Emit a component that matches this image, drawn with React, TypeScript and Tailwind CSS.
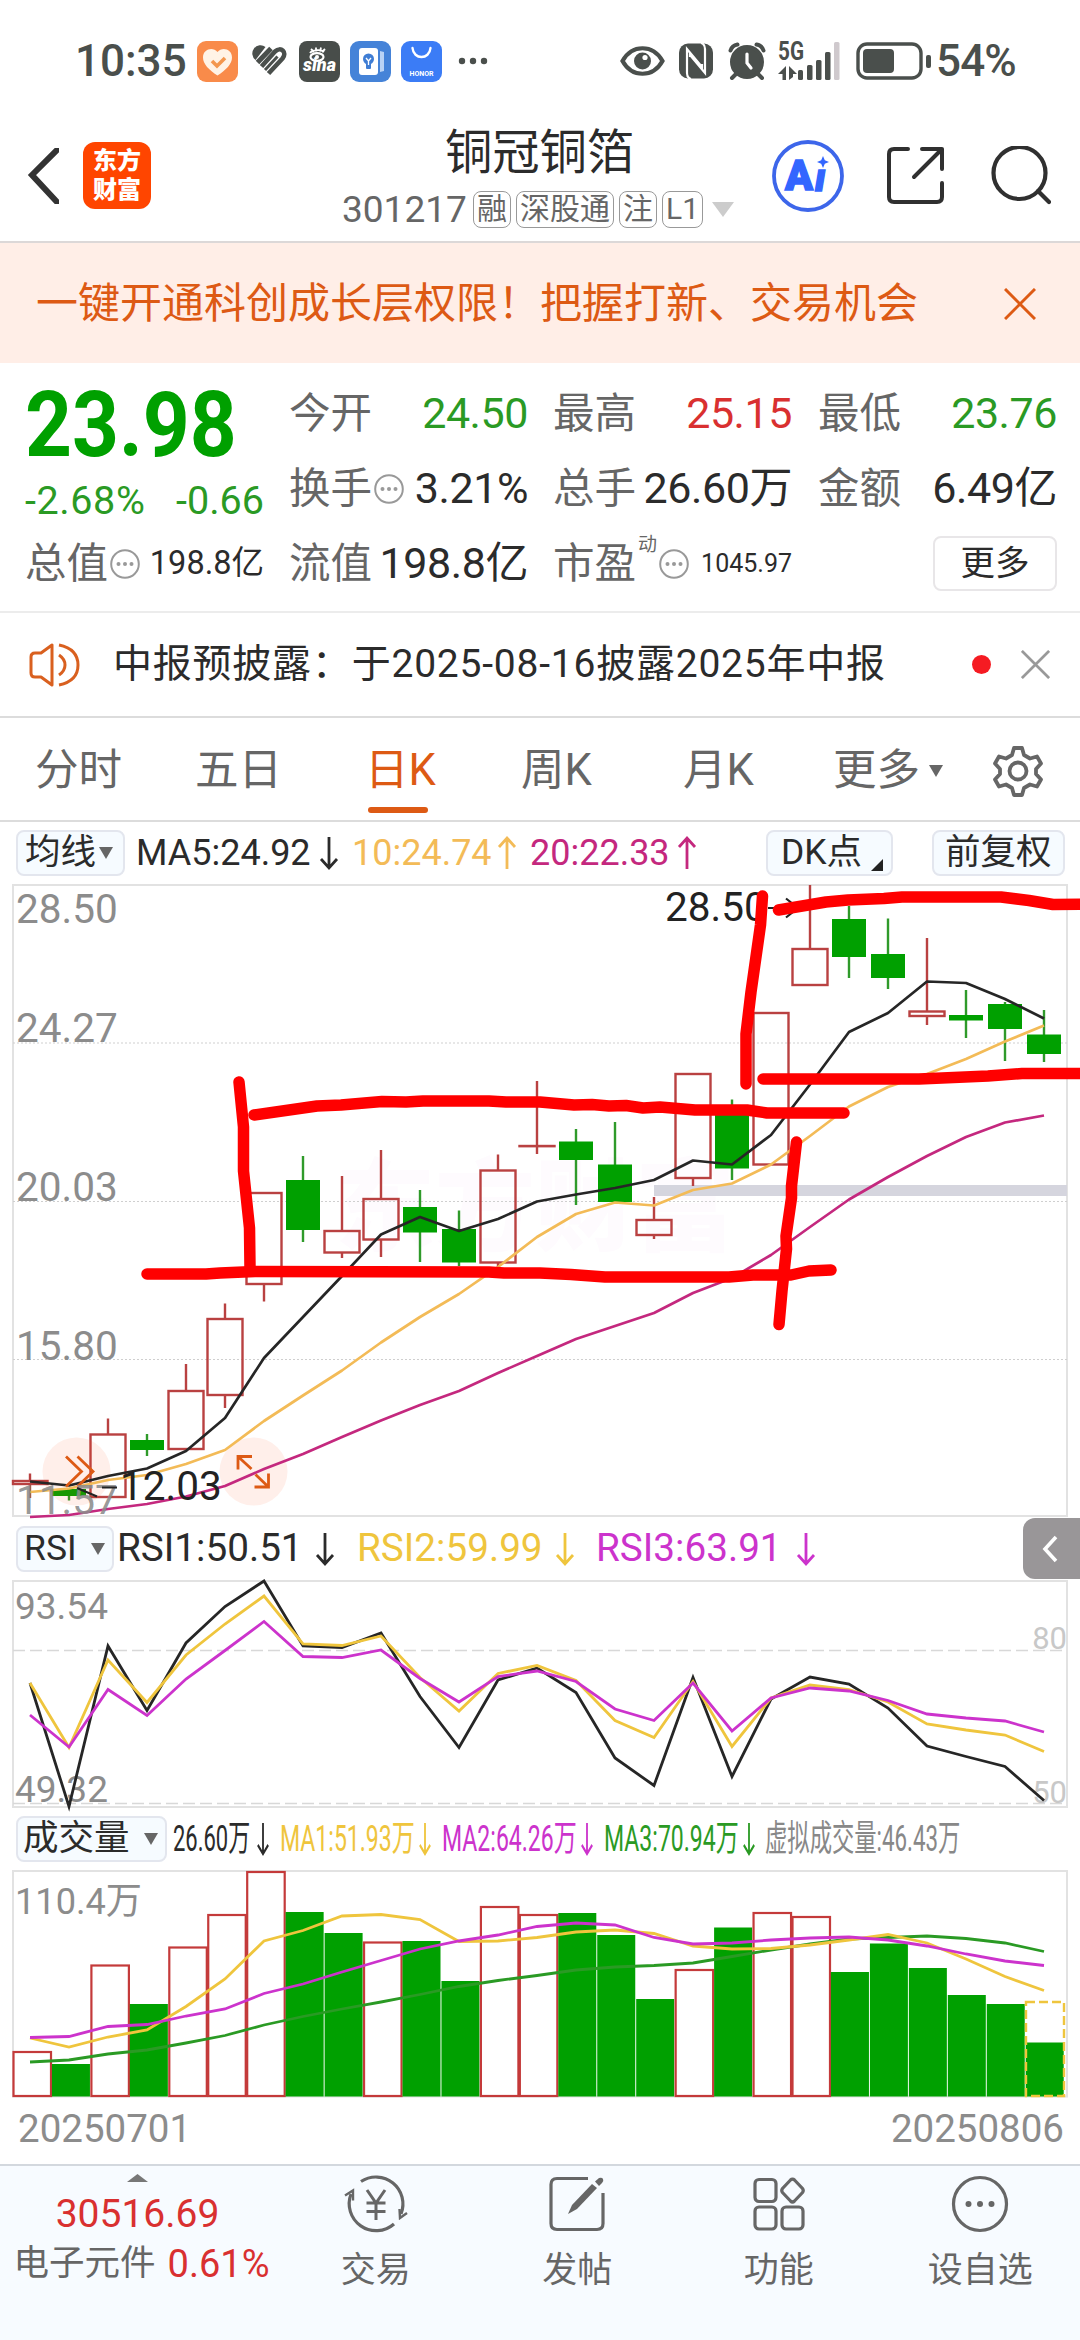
import React from 'react';
import clsx from 'clsx';

const UP = '#b94141';
const DOWN = '#00a000';
const GREEN_EDGE = '#2f9a2a';

// Horizontal centre of the nth trading day
const cx = (i: number) => 30 + i * 39;

const toPoints = (ys: number[]) => ys.map((y, i) => `${cx(i)},${y}`).join(' ');

interface Candle {
  up: boolean;
  top: number;
  bottom: number;
  high: number;
  low: number;
}

const candle = (up: boolean, top: number, bottom: number, high: number, low: number): Candle => ({
  up, top, bottom, high, low,
});

const candles: Candle[] = [
  candle(true, 1481, 1484, 1473.5, 1498),
  candle(false, 1489, 1496, 1489, 1500.5),
  candle(true, 1434.5, 1497, 1418.5, 1497),
  candle(false, 1440, 1450, 1434, 1456),
  candle(true, 1391, 1449, 1364, 1449),
  candle(true, 1319, 1395, 1303.5, 1408),
  candle(true, 1193, 1284, 1193, 1301.5),
  candle(false, 1180, 1230, 1156, 1242),
  candle(true, 1231, 1252.5, 1176, 1258),
  candle(true, 1199, 1239.5, 1150, 1257),
  candle(false, 1207, 1232.5, 1190, 1262),
  candle(false, 1229, 1262.5, 1210.5, 1266),
  candle(true, 1170.5, 1262.5, 1154.5, 1268),
  candle(true, 1146, 1146.2, 1081, 1154),
  candle(false, 1141.5, 1160, 1129, 1205),
  candle(false, 1164.5, 1202, 1122, 1202),
  candle(true, 1220, 1235, 1197, 1239),
  candle(true, 1074, 1178, 1074, 1186),
  candle(false, 1112, 1168.5, 1099.5, 1180),
  candle(true, 1013, 1164.5, 1013, 1164.5),
  candle(true, 949, 985, 885, 985),
  candle(false, 919, 957, 906, 978),
  candle(false, 954, 978, 918.5, 989),
  candle(true, 1011.5, 1016, 938, 1025),
  candle(false, 1015, 1020.5, 990, 1038),
  candle(false, 1004, 1029, 1002, 1061),
  candle(false, 1034.5, 1054, 1010, 1062),
];

const ma5 = [1481.5, 1485.5, 1476, 1468.5, 1451, 1418, 1358, 1317, 1276, 1234.5, 1217, 1231, 1219, 1201.5, 1194.5, 1188, 1180, 1160.5, 1164.5, 1135, 1084.5, 1032, 1013, 981.5, 983, 999, 1018.5];
const ma10 = [1492, 1488.5, 1480, 1475, 1464, 1450, 1421, 1395.5, 1370.5, 1342.5, 1317, 1294, 1267, 1237, 1214, 1202.5, 1205.5, 1190, 1183.5, 1164.5, 1136, 1106.5, 1087, 1074, 1059, 1041.5, 1025.5];
const ma20 = [1517, 1515, 1509, 1504, 1496.5, 1486, 1469, 1454, 1437, 1420.5, 1405, 1391, 1373, 1356, 1339, 1326, 1313, 1293, 1278, 1255, 1227, 1199.5, 1177, 1156, 1137, 1122.5, 1115.5];

const rsi1 = [1683, 1806.5, 1646, 1710.5, 1643, 1606.5, 1581, 1646, 1647.5, 1633, 1696.5, 1747.5, 1680, 1668, 1692.5, 1758, 1785.5, 1677.5, 1776.5, 1699, 1677, 1684, 1708, 1746, 1756.5, 1766.5, 1800.5];
const rsi2 = [1683, 1747.5, 1660, 1702.5, 1655, 1624, 1596, 1644, 1645.5, 1636, 1677.5, 1711, 1673.5, 1665.5, 1680.5, 1720.5, 1737.5, 1681.5, 1746.5, 1698, 1685, 1689.5, 1702, 1724, 1730, 1735, 1751.5];
const rsi3 = [1715, 1747, 1689.5, 1715.5, 1679, 1650.5, 1621.5, 1656.5, 1657.5, 1650, 1678.5, 1702, 1676.5, 1671, 1681.5, 1709, 1720.5, 1683, 1731, 1698, 1688, 1691, 1700.5, 1714, 1718, 1721, 1732];

const volumes = [2052, 2064, 1965.5, 2004, 1947.5, 1915, 1872, 1912, 1933, 1942.5, 1941, 1981, 1907, 1915, 1913, 1935, 1999, 1970, 1927.5, 1913, 1917, 1972, 1943.5, 1968, 1995, 2004, 2042.5];
const volumeUp = [0, 2, 4, 5, 6, 9, 12, 13, 17, 19, 20];
const vma1 = [2038, 2047, 2037, 2030, 2006.5, 1979, 1941, 1930.5, 1916, 1914.5, 1919.5, 1941.5, 1941, 1937.5, 1932, 1930, 1933.5, 1946, 1949, 1948.5, 1945, 1940, 1934.5, 1943, 1959, 1976.5, 1990.5];
const vma2 = [2037.5, 2036.5, 2026.5, 2024.5, 2016, 2009, 1993.5, 1984, 1972, 1960.5, 1949, 1941, 1935, 1926.5, 1923, 1925, 1937.5, 1944, 1943, 1940, 1938, 1937, 1940, 1946, 1954, 1961, 1965.5];
const vma3 = [2062, 2060, 2054, 2050, 2043, 2035.5, 2025, 2016.5, 2009, 2002, 1994.5, 1986.5, 1980.5, 1975.5, 1970, 1967, 1965.5, 1963, 1956.5, 1950, 1944, 1939, 1937.5, 1936, 1938.5, 1943, 1951.5];

// Hand-drawn marks on top of the chart
const marks = [
  '239,1082 243.5,1127 243.5,1171 249.5,1228 250,1268',
  '254,1115 317,1106 341,1105 382,1101.5 406,1102 423,1101 489,1101 506,1102 540,1102 574,1105 592,1104.5 609,1106 626,1105.5 643,1108 660,1107 695,1110 747,1110 767,1113 844,1113',
  '147,1274 206,1274 220,1273 255,1271.5 489,1272 504,1273 540,1273 571,1274.5 605,1277 729,1277 753,1275 791,1275 809,1271 831,1270',
  '796.5,1142 791.5,1186 791.5,1198 786,1236 786.5,1249 782,1291 779,1324.5',
  '762.5,896 760.5,925 751,992 746,1034 746,1084',
  '778.5,910 826,902 848,900 884,898.5 902,897 1001,897 1029,900.5 1053,904.5 1090,904',
  '763,1079 919,1079 988,1076 1022,1073.5 1090,1073.5',
];

const Arrow: React.FC<{ up?: boolean; className?: string }> = ({ up, className }) => (
  <svg viewBox="0 0 20 36" className={clsx('h-9 w-5 shrink-0', up && 'rotate-180', className)} fill="none" stroke="currentColor" strokeWidth="2.8">
    <path d="M10 2v31M2 24l8 9 8-9" />
  </svg>
);

const Triangle: React.FC<{ className?: string }> = ({ className }) => (
  <svg viewBox="0 0 14 12" preserveAspectRatio="none" className={clsx('shrink-0', className)} fill="currentColor">
    <path d="M0 0h14L7 12z" />
  </svg>
);

const Cross: React.FC<{ className?: string }> = ({ className }) => (
  <svg viewBox="0 0 32 32" className={className} fill="none" stroke="currentColor" strokeWidth="3">
    <path d="M1 1l30 30M31 1L1 31" />
  </svg>
);

const InfoDots: React.FC<{ className?: string }> = ({ className }) => (
  <svg viewBox="0 0 30 30" className={clsx('h-[30px] w-[30px] shrink-0 text-[#999]', className)}>
    <circle cx="15" cy="15" r="13.8" fill="none" stroke="currentColor" strokeWidth="2" />
    <g fill="currentColor">
      <circle cx="8.5" cy="15" r="2" />
      <circle cx="15" cy="15" r="2" />
      <circle cx="21.5" cy="15" r="2" />
    </g>
  </svg>
);

const StatusBar = () => (
  <div className="flex h-[122px] items-center pl-[75px] text-[44px] font-medium leading-none text-[#4a4f4c]">
    <span className="w-[122px]">10:35</span>
    <svg viewBox="0 0 41 41" className="h-[41px] w-[41px]">
      <rect width="41" height="41" rx="9" fill="#f98b4a" />
      <path d="M20.500 34.500C12 29 6 23 6 16.500 6 8 16 5.500 20.500 11 25 5.500 35 8 35 16.500 35 23 29 29 20.500 34.500z" fill="#fff3e6" />
      <path d="M15 20l5 5 8-8" fill="none" stroke="#f3974f" strokeWidth="3.600" />
    </svg>
    <svg viewBox="0 0 36 32" className="ml-[13px] h-8 w-9" fill="none" stroke="#4a4f4c" strokeLinejoin="round">
      <path d="M4.500 15A8 8 0 0 1 14.500 2z" fill="#4a4f4c" stroke="none" />
      <path d="M6.500 17.500L20 3.500" strokeWidth="5" />
      <path d="M10.500 21.500L24 6.500c6-5.500 12.500 1 7.500 7L17.500 28.500" strokeWidth="4.600" />
      <path d="M14 25L26.500 11.500" strokeWidth="3" />
    </svg>
    <svg viewBox="0 0 41 41" className="ml-[12px] h-[41px] w-[41px]">
      <rect width="41" height="41" rx="8" fill="#484d4a" />
      <ellipse cx="18" cy="16" rx="6.500" ry="3.800" fill="none" stroke="#fff" strokeWidth="2.200" />
      <circle cx="18" cy="16" r="2" fill="#fff" />
      <path d="M11 12c2-3 11-4 14-1M12 8l3 3M17 6.500v4M22 6.500l-1 4M26 8l-3 3" fill="none" stroke="#fff" strokeWidth="1.800" />
      <text x="20.500" y="29.500" textAnchor="middle" fontSize="18" fontWeight="900" fontStyle="italic" fill="#fff">sina</text>
    </svg>
    <svg viewBox="0 0 41 41" className="ml-[10px] h-[41px] w-[41px]">
      <rect width="41" height="41" rx="9" fill="#4583d8" />
      <path d="M30 10l4 1v19l-4 1z" fill="#b9d3f5" />
      <rect x="9" y="7" width="19" height="27" rx="3" fill="#fff" />
      <circle cx="18.500" cy="18" r="5.500" fill="#3f7dd4" />
      <rect x="16" y="22" width="5" height="6" rx="1" fill="#3f7dd4" />
      <path d="M16 17l2.500 3 2.500-3M18.500 20v4" fill="none" stroke="#fff" strokeWidth="1.300" />
    </svg>
    <svg viewBox="0 0 41 41" className="ml-[10px] h-[41px] w-[41px]">
      <rect width="41" height="41" rx="9" fill="#3b7cf6" />
      <path d="M11.500 7c1 12 17 12 18 0" fill="none" stroke="#fff" strokeWidth="2.400" strokeLinecap="round" />
      <text x="20.500" y="34.500" textAnchor="middle" fontSize="7" fontWeight="700" fill="#fff">HONOR</text>
    </svg>
    <svg viewBox="0 0 30 8" className="ml-[16px] h-2 w-[30px]" fill="#4a4f4c">
      <circle cx="4" cy="4" r="3.200" />
      <circle cx="15" cy="4" r="3.200" />
      <circle cx="26" cy="4" r="3.200" />
    </svg>

    <svg viewBox="0 0 45 32" className="ml-[132px] h-8 w-[45px]">
      <path d="M2.500 16C12-1 33-1 42.500 16 33 33 12 33 2.500 16z" fill="none" stroke="#4a4f4c" strokeWidth="4.200" />
      <circle cx="22.500" cy="16" r="8.500" fill="#4a4f4c" />
      <circle cx="25" cy="12.500" r="2.600" fill="#fff" />
    </svg>
    <svg viewBox="0 0 34 36" className="ml-[14px] h-9 w-[34px]">
      <rect y=".5" width="34" height="35" rx="9" fill="#4a4f4c" />
      <path d="M12 36Q8 35 8 30V6l15 18v-3M22 0q4 1 4 6v24L11 12v2" fill="none" stroke="#fff" strokeWidth="2.200" />
    </svg>
    <svg viewBox="0 0 38 38" className="ml-[15px] h-[38px] w-[38px]" fill="none" stroke="#4a4f4c" strokeWidth="4" strokeLinecap="round">
      <circle cx="19" cy="20" r="15" fill="#4a4f4c" />
      <path d="M2.500 8.500Q4 3.500 9.500 2.500M35.500 8.500Q34 3.500 28.500 2.500M9 31l-5 5M29 31l5 5" />
      <path d="M19 12v9l4 5" stroke="#fff" strokeWidth="3.200" />
    </svg>
    <svg viewBox="0 -4 64 44" className="ml-[12px] h-11 w-[64px] -translate-y-[2px] overflow-visible" fill="#4a4f4c">
      <text x="0" y="19" fontSize="25" fontWeight="700" textLength="26" lengthAdjust="spacingAndGlyphs">5G</text>
      <path d="M0 33l8-8v14H4.500v-6zM11 25l8 8h-4v3l-4 3z" />
      <rect x="20" y="29" width="5" height="10" rx="1.500" />
      <rect x="29" y="24" width="5.500" height="15" rx="1.500" />
      <rect x="38" y="19" width="5.500" height="20" rx="1.500" />
      <rect x="47" y="11" width="5.500" height="28" rx="1.500" />
      <rect x="56" y="1" width="5.500" height="38" rx="1.500" fill="#cfc9cd" />
    </svg>
    <svg viewBox="0 0 76 38" className="ml-[14px] h-[38px] w-[76px]">
      <rect x="2" y="2" width="63" height="34" rx="9" fill="none" stroke="#4a4f4c" strokeWidth="3.400" />
      <rect x="7" y="7" width="31" height="24" rx="4" fill="#4a4f4c" />
      <rect x="70" y="13" width="5" height="13" rx="2" fill="#4a4f4c" />
    </svg>
    <span className="ml-[4px] tracking-[-0.02em]">54%</span>
  </div>
);

const tags = ['融', '深股通', '注', 'L1'];

const Header = () => (
  <div className="flex h-[121px] border-b-2 border-[#dcd8d8] text-[#2b2b2b]">
    <svg viewBox="0 0 32 56" className="ml-[27px] mt-[26px] h-14 w-8" fill="none" stroke="#333" strokeWidth="6">
      <path d="M30 2L5 27l25 27" strokeLinecap="round" />
    </svg>
    <div className="ml-[24px] mt-[20px] flex h-[67px] w-[68px] flex-col items-center justify-center rounded-xl bg-[#ff4500] text-[24px] font-black leading-[29px] text-white">
      <span>东方</span>
      <span>财富</span>
    </div>
    <div className="ml-[191px] w-[410px]">
      <div className="mt-[7px] pl-[103px] text-[47.300px] leading-[48px]">铜冠铜箔</div>
      <div className="mt-[13px] flex h-[38px] items-center text-[#666]">
        <span className="w-[131px] text-[37px] leading-none">301217</span>
        <div className="flex gap-[5px]">
          {tags.map((tag) => (
            <span key={tag} className="flex h-[37px] items-center rounded-[8px] border-[1.5px] border-[#999] px-[3px] text-[30px] leading-none">
              {tag}
            </span>
          ))}
        </div>
        <Triangle className="ml-[9px] h-[15px] w-[22px] text-[#ccc]" />
      </div>
    </div>
    <svg viewBox="0 0 72 74" className="ml-[20px] mt-[17px] h-[74px] w-[72px]">
      <circle cx="36" cy="37" r="34" fill="none" stroke="#3d66ea" strokeWidth="3.800" />
      <g fill="#3366ff" stroke="#3366ff" strokeWidth="1.500" fontWeight="900" fontSize="42">
        <text x="13" y="50.500" textLength="28" lengthAdjust="spacingAndGlyphs">A</text>
        <text x="43" y="52" fontSize="38" fontStyle="italic">ı</text>
      </g>
      <path d="M51 17l1.800 4.200L57 23l-4.200 1.800L51 29l-1.800-4.200L45 23l4.200-1.800z" fill="#3366ff" />
    </svg>
    <svg viewBox="0 0 60 60" className="ml-[42px] mt-[24px] h-[60px] w-[60px]" fill="none" stroke="#303030" strokeWidth="4" strokeLinecap="round" strokeLinejoin="round">
      <path d="M22 3H8Q3 3 3 8v43q0 5 5 5h43q5 0 5-5V37M36 3h20v20M56 3L28 31" />
    </svg>
    <svg viewBox="0 0 60 60" className="ml-[45px] mt-[24px] h-[60px] w-[60px]" fill="none" stroke="#303030" strokeWidth="4.200" strokeLinecap="round">
      <circle cx="28.500" cy="27" r="26" />
      <path d="M47 45l11 11" />
    </svg>
  </div>
);

const Banner = () => (
  <div className="flex h-[120px] items-center justify-between bg-[#ffeee7] pl-[36px] pr-[44px] pt-[2px] text-[#dd5a14]">
    <span className="text-[42px] leading-none">一键开通科创成长层权限！把握打新、交易机会</span>
    <Cross className="h-8 w-8" />
  </div>
);

interface FieldProps {
  label: string;
  value: string;
  info?: boolean;
  color?: string;
}

const Field: React.FC<FieldProps> = ({ label, value, info, color = 'text-[#2b2b2b]' }) => (
  <div className="flex h-[75px] w-[239px] items-center justify-between whitespace-nowrap text-[43px] leading-none">
    <span className="flex items-center text-[41.500px] text-[#666]">
      {label}
      {info && <InfoDots className="ml-[2px]" />}
    </span>
    <span className={clsx('tracking-[-0.01em]', color)}>{value}</span>
  </div>
);

const Quote = () => (
  <div className="flex h-[250px] border-b-2 border-[#ececec] pl-[25px] pt-[13px]">
    <div className="w-[239px]">
      <div className="flex h-[99px] w-[212px] items-center text-[90px] font-bold leading-none text-[#00a000]">
        <span className="origin-left scale-x-[0.91]">23.98</span>
      </div>
      <div className="flex h-[51px] items-center justify-between whitespace-nowrap text-[39.500px] leading-none text-[#2a9a24]">
        <span className="tracking-[0.015em]">-2.68%</span>
        <span>-0.66</span>
      </div>
      <div className="flex h-[75px] items-center justify-between whitespace-nowrap text-[32.500px] leading-none text-[#2b2b2b]">
        <span className="flex items-center text-[41.500px] text-[#666]">
          总值
          <InfoDots className="ml-[2px]" />
        </span>
        198.8亿
      </div>
    </div>
    <div className="ml-[25px] w-[239px]">
      <Field label="今开" value="24.50" color="text-[#2a9a24]" />
      <Field label="换手" value="3.21%" info />
      <Field label="流值" value="198.8亿" />
    </div>
    <div className="ml-[25px] w-[239px]">
      <Field label="最高" value="25.15" color="text-[#d93030]" />
      <Field label="总手" value="26.60万" />
      <div className="flex h-[75px] items-center whitespace-nowrap leading-none">
        <span className="text-[41.500px] text-[#666]">市盈</span>
        <span className="mb-[38px] ml-[2px] text-[19px] text-[#666]">动</span>
        <InfoDots className="ml-[2px]" />
        <span className="ml-auto text-[25px] text-[#2b2b2b]">1045.97</span>
      </div>
    </div>
    <div className="ml-[26px] w-[239px]">
      <Field label="最低" value="23.76" color="text-[#2a9a24]" />
      <Field label="金额" value="6.49亿" />
      <div className="flex h-[75px] items-center justify-end">
        <button className="h-[55px] w-[124px] rounded-lg border-2 border-[#e8e6e8] text-[34.500px] leading-none text-[#2b2b2b]">更多</button>
      </div>
    </div>
  </div>
);

const Notice = () => (
  <div className="flex h-[105px] items-center border-b-2 border-[#dcdcdc] pl-[28px]">
    <svg viewBox="0 0 54 46" className="h-[46px] w-[54px]" fill="none" stroke="#d9601f" strokeWidth="3">
      <path d="M24 3v40L13 35H7q-4 0-4-4V15q0-4 4-4h6z" strokeLinejoin="round" />
      <path d="M31 13q6 4 6 10t-6 10M31 3q19 4 19 20T31 43" />
    </svg>
    <span className="ml-[31px] w-[859px] whitespace-nowrap text-[39px] leading-none tracking-[0.02em] text-[#2b2b2b]">
      中报预披露：于2025-08-16披露2025年中报
    </span>
    <span className="h-[19px] w-[19px] rounded-full bg-[#f51b22]" />
    <Cross className="ml-[30px] h-[29px] w-[29px] text-[#999]" />
  </div>
);

const tabs = [
  { label: '分时', width: 'w-[160px]' },
  { label: '五日', width: 'w-[170px]' },
  { label: '日K', width: 'w-[156px]', active: true },
  { label: '周K', width: 'w-[162px]' },
  { label: '月K', width: 'w-[150px]' },
];

const Tabs = () => (
  <div className="flex h-[104px] items-center border-b-2 border-[#dcdcdc] pl-[35px] pt-[4px] text-[43.500px] leading-none text-[#666]">
    {tabs.map((tab) => (
      <div key={tab.label} className={clsx('relative flex h-full items-center', tab.width, tab.active && 'text-[#dd5a14]')}>
        {tab.label}
        {tab.active && <span className="absolute bottom-[7px] left-[3px] h-[6px] w-[60px] rounded-full bg-[#dd5a14]" />}
      </div>
    ))}
    更多
    <Triangle className="ml-[9px] h-[12px] w-[14px]" />
    <svg viewBox="0 0 52 52" className="ml-[49px] h-[52px] w-[52px]" fill="none" stroke="#666" strokeWidth="3.800" strokeLinejoin="round">
      <path d="M22 3h8l2 7 6 3.500 7-2 4 7-5 5.500v5l5 5.500-4 7-7-2-6 3.500-2 7h-8l-2-7-6-3.500-7 2-4-7 5-5.500v-5l-5-5.500 4-7 7 2L20 10z" />
      <circle cx="26" cy="26" r="8.500" />
    </svg>
  </div>
);

const Chip: React.FC<{ className?: string; children: React.ReactNode }> = ({ className, children }) => (
  <div className={clsx('flex h-[46px] shrink-0 items-center rounded-lg border-2 border-[#e3e6ee] bg-[#f6fbff] text-[35.500px] text-[#2b2b2b]', className)}>
    {children}
  </div>
);

const axis = { fill: '#8c8c8c', fontSize: 40.5 };

const PriceChart = () => (
  <>
    <div className="flex h-[62px] items-center whitespace-nowrap pl-[16px] text-[36px] leading-none text-[#2b2b2b]">
      <Chip className="w-[109px] pl-[7px]">
        均线
        <Triangle className="ml-[3px] h-[12px] w-[14px] text-[#666]" />
      </Chip>
      <span className="ml-[11px] w-[183px]">MA5:24.92</span>
      <Arrow />
      <span className="ml-[13px] w-[145px] text-[#f3bb57]">10:24.74</span>
      <Arrow up className="text-[#f3bb57]" />
      <span className="ml-[13px] w-[147px] text-[#c4287e]">20:22.33</span>
      <Arrow up className="text-[#c4287e]" />
      <Chip className="ml-[69px] w-[127px] pl-[13px]">
        DK点
        <svg viewBox="0 0 12 12" className="ml-[9px] mt-[24px] h-3 w-3">
          <path d="M12 0v12H0z" fill="#222" />
        </svg>
      </Chip>
      <Chip className="ml-[39px] w-[133px] pl-[11px]">前复权</Chip>
    </div>
    <svg viewBox="0 884 1080 633" className="block h-[633px] w-[1080px] overflow-visible">
      <text x="335" y="1243" fontSize="100" fontWeight="900" fill="#fefbfe">东方财富</text>
      <rect x="13" y="885" width="1054" height="631" fill="none" stroke="#e2e2e2" strokeWidth="2" />
      {[1043, 1201.500, 1359.500].map((y) => (
        <path key={y} d={`M13 ${y}H1067`} stroke="#cfcfcf" strokeWidth="1" strokeDasharray="2 2" />
      ))}
      <rect x="654" y="1185" width="413" height="11" fill="#d5d5de" />
      {candles.map((c, i) => {
        const x = cx(i);
        if (c.up) {
          const left = Math.max(13, x - 17.500);
          return (
            <g key={i} stroke={UP} strokeWidth="2.400" fill="none">
              <path d={`M${x} ${c.high}V${c.top}M${x} ${c.bottom}V${c.low}`} />
              <rect x={left} y={c.top} width={x + 17.500 - left} height={c.bottom - c.top} />
            </g>
          );
        }
        return (
          <g key={i}>
            <path d={`M${x} ${c.high}V${c.low}`} stroke={GREEN_EDGE} strokeWidth="2.400" />
            <rect x={x - 17} y={c.top} width="34" height={c.bottom - c.top} fill={DOWN} />
          </g>
        );
      })}
      <circle cx="76.500" cy="1471.500" r="34" fill="#ff5014" opacity=".09" />
      <circle cx="253.500" cy="1471.500" r="34" fill="#ff5014" opacity=".09" />
      <g fill="none" strokeWidth="2.700" strokeLinejoin="round">
        <polyline points={toPoints(ma5)} stroke="#262626" />
        <polyline points={toPoints(ma10)} stroke="#f3bb57" />
        <polyline points={toPoints(ma20)} stroke="#c4287e" />
      </g>
      <g fill="none" stroke="#dd5a14" strokeWidth="2.800">
        <path d="M66 1456.500l15.500 15-15.500 15M77.500 1456.500l15.500 15-15.500 15" />
        <path d="M252 1456.500h-14v13M238 1456.500l13.500 12.500M268.500 1473.500v13.500h-14M268.500 1487l-13-12.500" />
      </g>
      <g {...axis}>
        <text x="16" y="923">28.50</text>
        <text x="16" y="1042">24.27</text>
        <text x="16" y="1201">20.03</text>
        <text x="16" y="1359.500">15.80</text>
        <text x="16" y="1513.500" fillOpacity=".9">11.57</text>
      </g>
      <g fill="#222" fontSize="40.500">
        <text x="665" y="921">28.50</text>
        <text x="120" y="1500">12.03</text>
      </g>
      <path d="M768 908h29M786 898.500l12 9.500-12 9.500M77 1488l20 8.500M102 1487.500h15" fill="none" stroke="#222" strokeWidth="2.200" />
      <g fill="none" stroke="#f00" strokeWidth="11.500" strokeLinecap="round" strokeLinejoin="round">
        {marks.map((points) => (
          <polyline key={points} points={points} />
        ))}
      </g>
    </svg>
  </>
);

const RsiChart = () => (
  <>
    <div className="flex h-[63px] items-center whitespace-nowrap pl-[16px] text-[38.700px] leading-none text-[#2b2b2b]">
      <Chip className="w-[98px] pl-[6px]">
        RSI
        <Triangle className="ml-[14px] h-[12px] w-[14px] text-[#666]" />
      </Chip>
      <span className="ml-[3px] w-[198px]">RSI1:50.51</span>
      <Arrow />
      <span className="ml-[22px] w-[198px] text-[#efc53d]">RSI2:59.99</span>
      <Arrow className="text-[#efc53d]" />
      <span className="ml-[21px] w-[200px] text-[#cc33cc]">RSI3:63.91</span>
      <Arrow className="text-[#cc33cc]" />
      <div className="ml-auto flex h-[61px] w-[57px] items-center justify-center rounded-l-xl bg-[#999698]">
        <svg viewBox="0 0 16 28" className="mr-[4px] h-7 w-4" fill="none" stroke="#fff" strokeWidth="3.600">
          <path d="M14 2L3 14l11 12" />
        </svg>
      </div>
    </div>
    <svg viewBox="0 1580 1080 228" className="block h-[228px] w-[1080px] overflow-visible">
      <rect x="13" y="1581" width="1054" height="226" fill="none" stroke="#e2e2e2" strokeWidth="2" />
      <path d="M13 1650.500H1067M13 1803.500H1067" stroke="#d8d8d8" strokeWidth="1.500" strokeDasharray="12 5" />
      <g fill="#c8c8c8" fontSize="31" textAnchor="end">
        <text x="1067" y="1649">80</text>
        <text x="1067" y="1803">50</text>
      </g>
      <g fill="#8c8c8c" fontSize="37">
        <text x="15" y="1619">93.54</text>
        <text x="15" y="1802">49.32</text>
      </g>
      <g fill="none" strokeWidth="2.800">
        <polyline points={toPoints(rsi1)} stroke="#262626" />
        <polyline points={toPoints(rsi2)} stroke="#efc53d" />
        <polyline points={toPoints(rsi3)} stroke="#cc33cc" />
      </g>
    </svg>
  </>
);

const volumeLegend = [
  { text: '26.60万', width: 'w-[80px]', squeeze: 'scale-x-[0.61]', color: 'text-[#2b2b2b]', ml: 'ml-[6px]', arrow: true },
  { text: 'MA1:51.93万', width: 'w-[135px]', squeeze: 'scale-x-[0.64]', color: 'text-[#efc53d]', ml: 'ml-[7px]', arrow: true },
  { text: 'MA2:64.26万', width: 'w-[135px]', squeeze: 'scale-x-[0.64]', color: 'text-[#cc33cc]', ml: 'ml-[7px]', arrow: true },
  { text: 'MA3:70.94万', width: 'w-[135px]', squeeze: 'scale-x-[0.64]', color: 'text-[#2a9a24]', ml: 'ml-[7px]', arrow: true },
  { text: '虚拟成交量:46.43万', width: 'w-[197px]', squeeze: 'scale-x-[0.62]', color: 'text-[#888]', ml: 'ml-[6px]', arrow: false },
];

const VolumeChart = () => (
  <>
    <div className="flex h-[62px] items-center whitespace-nowrap pl-[16px] text-[36px] leading-none text-[#2b2b2b]">
      <Chip className="w-[151px] pl-[5px]">
        成交量
        <Triangle className="ml-[14px] h-[12px] w-[14px] text-[#666]" />
      </Chip>
      {volumeLegend.map((item) => (
        <div key={item.text} className={clsx('flex items-center', item.color, item.ml)}>
          <div className={item.width}>
            <span className={clsx('inline-block origin-left', item.squeeze)}>
              {item.text}
            </span>
          </div>
          {item.arrow && <Arrow className="scale-x-[0.65]" />}
        </div>
      ))}
    </div>
    <svg viewBox="0 1870 1080 228" className="block h-[228px] w-[1080px]">
      <rect x="13" y="1871" width="1054" height="225.500" fill="none" stroke="#e2e2e2" strokeWidth="2" />
      <text x="15" y="1914" fontSize="37" fill="#8c8c8c" textLength="127" lengthAdjust="spacingAndGlyphs">110.4万</text>
      {volumes.map((top, i) => {
        const x = 12.5 + i * 38.95;
        return volumeUp.includes(i) ? (
          <rect key={i} x={x + 1} y={top} width="37.500" height={2096 - top} fill="#fff" stroke="#c43a3a" strokeWidth="2.200" />
        ) : (
          <rect key={i} x={x + 0.5} y={top} width="38" height={2096.5 - top} fill={DOWN} />
        );
      })}
      <rect x="1026" y="2002" width="38" height="94" fill="none" stroke="#efc53d" strokeWidth="2.400" strokeDasharray="9 4" />
      <g fill="none" strokeWidth="2.800">
        <polyline points={toPoints(vma3)} stroke="#2a9a24" />
        <polyline points={toPoints(vma1)} stroke="#efc53d" />
        <polyline points={toPoints(vma2)} stroke="#cc33cc" />
      </g>
    </svg>
    <div className="flex h-[66px] items-center justify-between pb-[4px] pl-[18px] pr-[16px] text-[38.500px] leading-none text-[#8c8c8c]">
      <span>20250701</span>
      <span>20250806</span>
    </div>
  </>
);

const NavItem: React.FC<{ label: string; children: React.ReactNode }> = ({ label, children }) => (
  <div className="flex w-[201.500px] shrink-0 flex-col items-center pt-[6px] text-[35px] leading-none text-[#666]">
    <svg viewBox="0 0 64 64" className="h-16 w-16" fill="none" stroke="#666" strokeWidth="3.200">
      {children}
    </svg>
    <span className="mt-[17px]">{label}</span>
  </div>
);

const BottomNav = () => (
  <div className="flex h-[176px] border-t-2 border-[#d3d8de] bg-[#f7fbff]">
    <div className="flex w-[275px] shrink-0 flex-col items-center pt-[8px] leading-none">
      <Triangle className="h-[8px] w-[21px] rotate-180 text-[#777]" />
      <span className="mt-[13px] text-[39px] text-[#d93030]">30516.69</span>
      <div className="ml-[8px] mt-[11px] flex items-center whitespace-nowrap text-[35.500px] text-[#666]">
        电子元件
        <span className="ml-[12px] text-[38px] text-[#d93030]">0.61%</span>
      </div>
    </div>
    <NavItem label="交易">
      <path d="M17 9.500A27 27 0 0 1 57 42M50 52A27 27 0 0 1 7 22" />
      <path d="M1 23.500l8-5v10M63 41l-7 5-.5-9" strokeWidth="2.400" />
      <path d="M23 18l9 13 9-13M32 31v17M22.500 31h19M22.500 39.500h19" strokeWidth="3" />
    </NavItem>
    <NavItem label="发帖">
      <path d="M43 6.500H12q-6 0-6 6v39q0 6 6 6h40q6 0 6-6V21" />
      <path d="M23 42l4-9 20-21 5 4-20 21z" fill="#666" stroke="none" />
      <path d="M50 9.500l4-3.500q3-1 4 1t-1 4l-3 3z" fill="#666" stroke="none" />
    </NavItem>
    <NavItem label="功能">
      <rect x="8" y="7.500" width="21" height="22" rx="4" />
      <rect x="8" y="35" width="21" height="22" rx="4" />
      <rect x="35" y="35" width="21" height="22" rx="4" />
      <path d="M43.500 8q2-2 4 0l8 8.500q1.500 2 0 4l-8 8.500q-2 2-4 0l-8-8.500q-1.500-2 0-4z" />
    </NavItem>
    <NavItem label="设自选">
      <circle cx="32" cy="32" r="26.500" />
      <g fill="#666" stroke="none">
        <circle cx="20.500" cy="32" r="3" />
        <circle cx="32" cy="32" r="3" />
        <circle cx="43.500" cy="32" r="3" />
      </g>
    </NavItem>
  </div>
);

export default function App() {
  return (
    <div className="h-[2340px] w-[1080px] overflow-hidden bg-white font-[Roboto,'Noto_Sans_CJK_SC',sans-serif]">
      <StatusBar />
      <Header />
      <Banner />
      <Quote />
      <Notice />
      <Tabs />
      <PriceChart />
      <RsiChart />
      <VolumeChart />
      <BottomNav />
    </div>
  );
}
